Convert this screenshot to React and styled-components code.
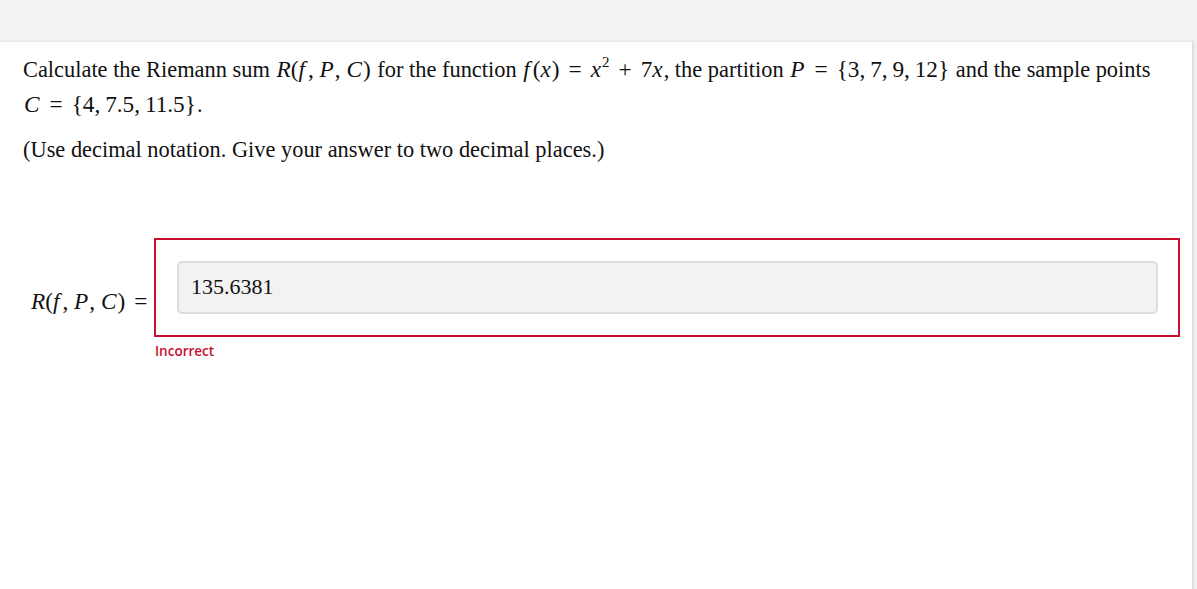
import React from 'react';
import styled, { createGlobalStyle } from 'styled-components';

const GlobalStyle = createGlobalStyle`
  html, body {
    margin: 0;
    padding: 0;
    background: #f2f2f2;
    font-family: "Liberation Serif", "Times New Roman", serif;
    color: #111;
  }
`;

const Page = styled.div`
  height: 589px;
  padding-top: 41px;
  box-sizing: border-box;
  display: flex;
  flex-direction: column;
`;

const Panel = styled.div`
  flex: 1;
  width: 1193px;
  background: #fff;
  border-top: 1px solid #e8e8e8;
  border-right: 1px solid #dcdcdc;
  box-shadow: 2px 0 2px #e6e6e6;
  box-sizing: border-box;
  padding: 11px 23px 0 23px;
`;

const Para = styled.p`
  margin: 0 0 13px 0;
  font-size: 22.4px;
  line-height: 32px;
`;

const Math = styled.span`
  white-space: nowrap;
  font-size: 1.04em;
  margin: 0 1px;
`;

const M = styled.span`
  font-style: ${(p) => (p.$it ? 'italic' : 'normal')};
  margin-right: ${(p) => p.$gap || 0}px;
`;

const Set = styled.span`
  word-spacing: -1px;
`;

const Op = styled.span`
  margin: 0 9px;
`;

const Sup = styled.sup`
  font-size: 15px;
  vertical-align: 0;
  position: relative;
  top: -10px;
  margin-left: 1px;
`;

const AnswerRow = styled.div`
  display: flex;
  align-items: flex-start;
  margin-top: 72px;
`;

const Label = styled.div`
  width: 131px;
  padding: 50px 0 0 7px;
  box-sizing: border-box;
  font-size: 22.4px;
  white-space: nowrap;
`;

const Field = styled.div`
  display: flex;
  flex-direction: column;
  flex: 1;
  margin-right: -11px;
`;

const Frame = styled.div`
  border: 2px solid #c8102e;
  padding: 21px 20px 21px 21px;
  height: 99px;
  box-sizing: border-box;
`;

const Input = styled.div`
  height: 53px;
  box-sizing: border-box;
  background: #f2f2f2;
  border: 2px solid #dddddd;
  border-radius: 5px;
  padding: 11px 12px;
  font-size: 22px;
  line-height: 26px;
`;

const Feedback = styled.div`
  margin: 5px 0 0 1px;
  font-family: "Open Sans", "Noto Sans", sans-serif;
  font-weight: 600;
  font-size: 13.5px;
  color: #c8102e;
`;

const Triple = () => (
  <>
    <M $it>R</M>(<M $it $gap={3}>f</M>, <M $it $gap={1}>P</M>, <M $it $gap={1}>C</M>)
  </>
);

const App = () => (
  <>
    <GlobalStyle />
    <Page>
      <Panel>
        <Para>
          Calculate the Riemann sum <Math><Triple /></Math> for the function{' '}
          <Math>
            <M $it $gap={3}>f</M>(<M $it $gap={1}>x</M>)<Op>=</Op><M $it>x</M><Sup>2</Sup><Op>+</Op>7<M $it>x</M>
          </Math>
          , the partition{' '}
          <Math>
            <M $it $gap={1}>P</M><Op>=</Op><Set>{'{'}3, 7, 9, 12{'}'}</Set>
          </Math>{' '}
          and the sample points{' '}
          <Math>
            <M $it $gap={1}>C</M><Op>=</Op><Set>{'{'}4, 7.5, 11.5{'}'}</Set>
          </Math>
          .
        </Para>
        <Para>(Use decimal notation. Give your answer to two decimal places.)</Para>
        <AnswerRow>
          <Label>
            <Math>
              <Triple />
              <Op>=</Op>
            </Math>
          </Label>
          <Field>
            <Frame>
              <Input>135.6381</Input>
            </Frame>
            <Feedback>Incorrect</Feedback>
          </Field>
        </AnswerRow>
      </Panel>
    </Page>
  </>
);

export default App;
